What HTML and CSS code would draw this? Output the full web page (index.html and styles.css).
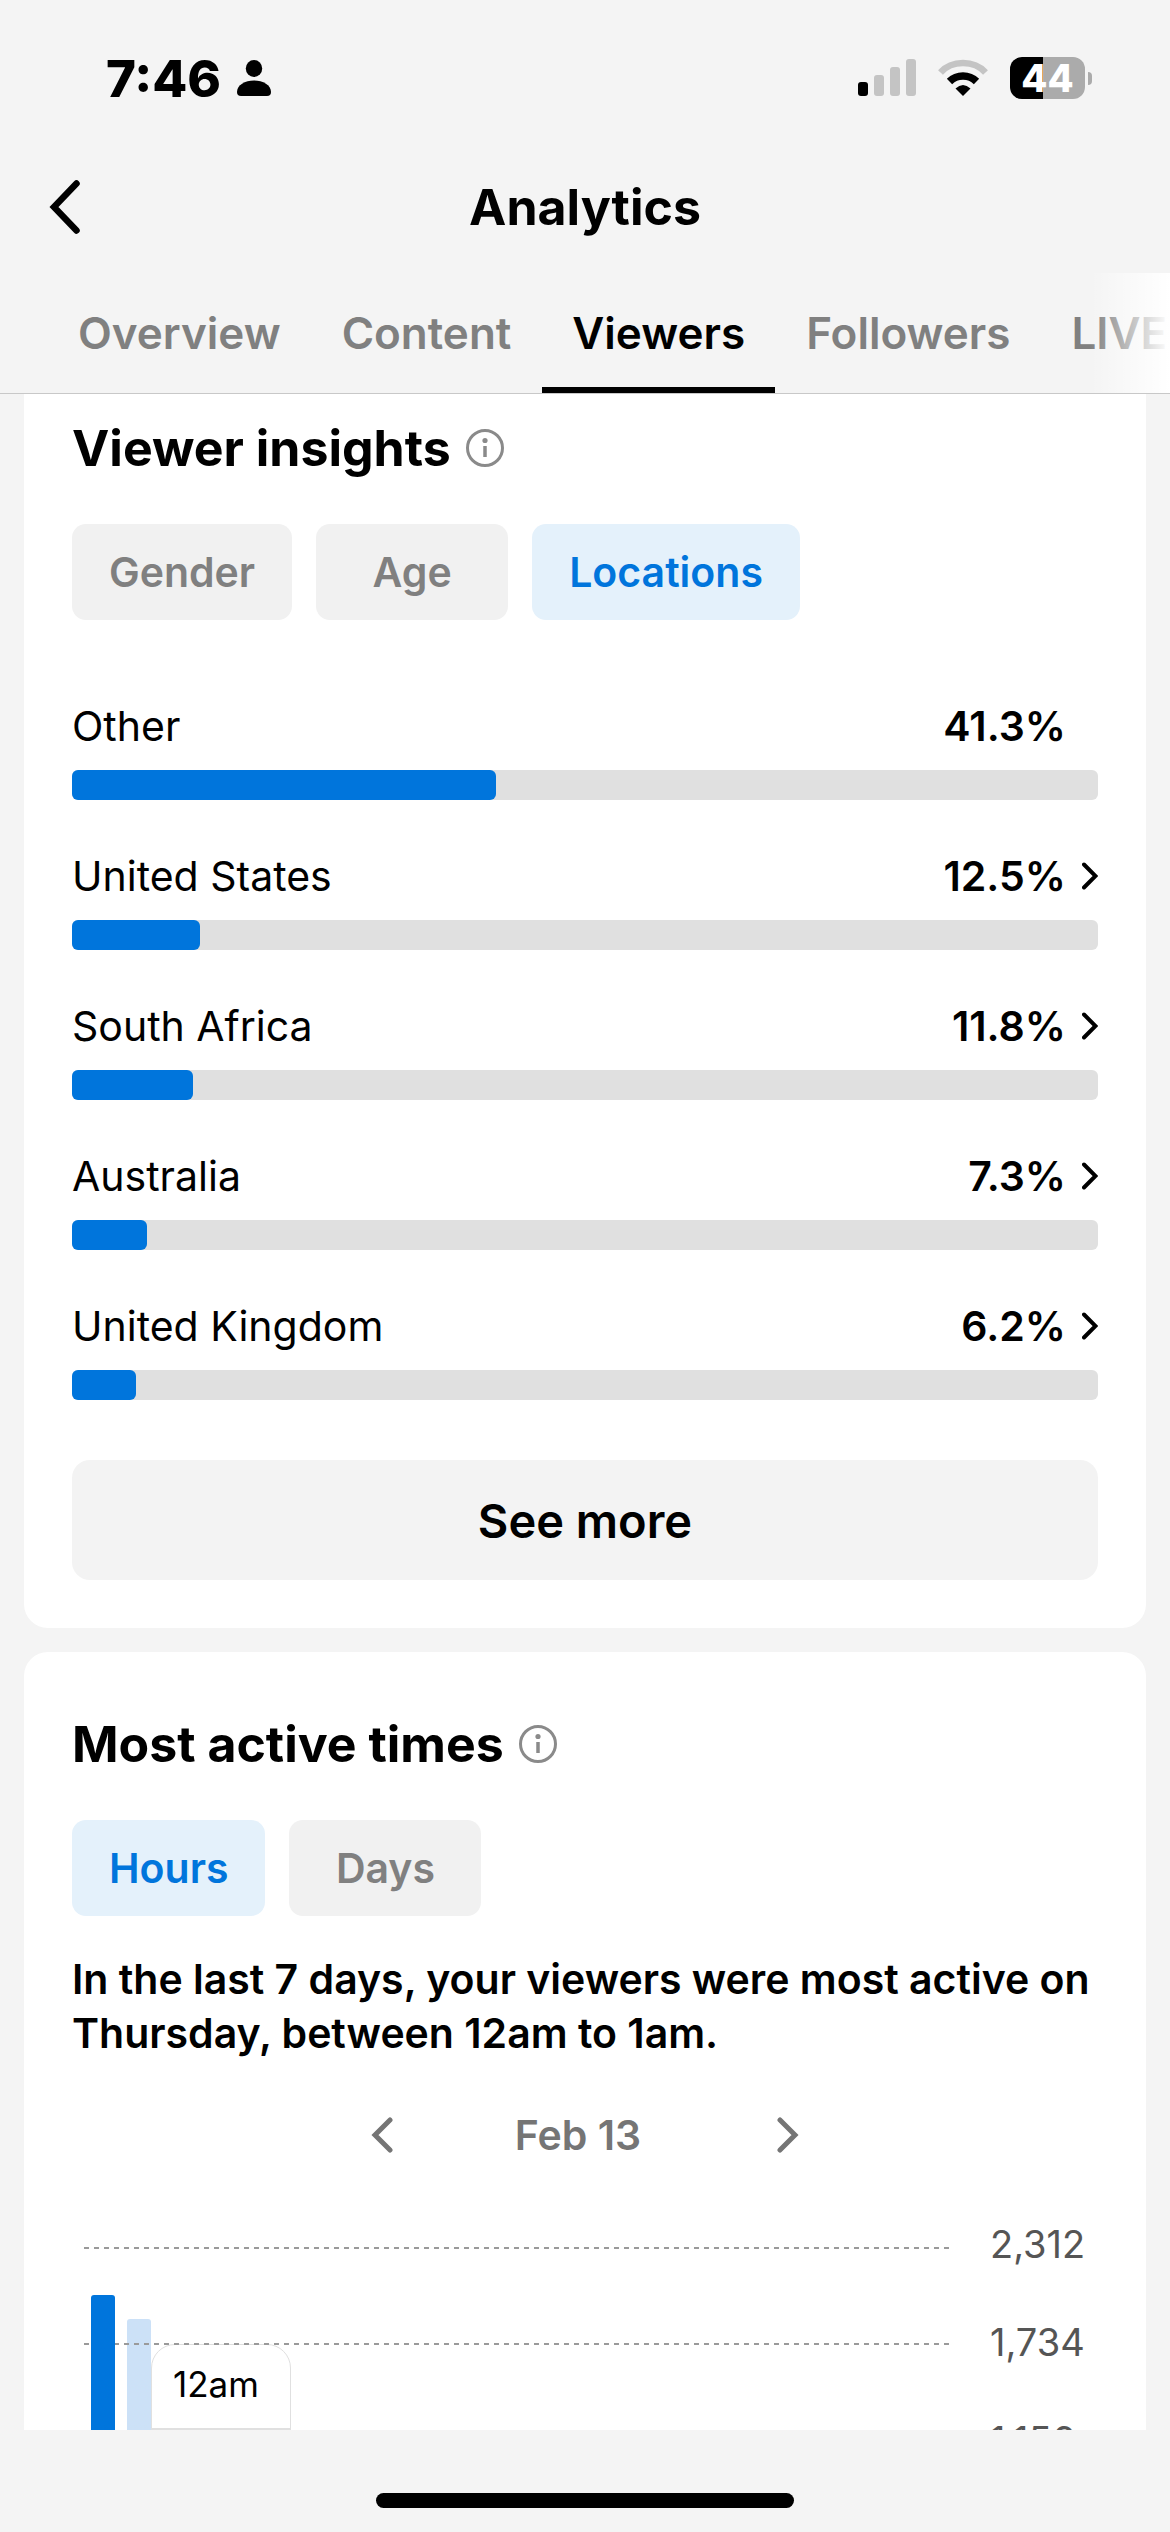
FILE: index.html
```html
<!DOCTYPE html>
<html lang="en">
<head>
<meta charset="utf-8">
<meta name="viewport" content="width=device-width, initial-scale=1">
<title>Analytics</title>
<link rel="stylesheet" href="styles.css">
</head>
<body>
<div class="status">
  <div class="status-left">
    <span class="time">7:46</span>
    <svg width="34" height="36" viewBox="0 0 34 36"><ellipse cx="17" cy="8.5" rx="8.2" ry="8.5"/><path d="M0 32C0 25 8 20.500 17 20.500S34 25 34 32Q34 36 30 36H4Q0 36 0 32Z"/></svg>
  </div>
  <div class="status-right">
    <svg width="58" height="38" viewBox="0 0 58 38"><rect x="0" y="23" width="10" height="14" rx="3"/><g fill="#c4c4c4"><rect x="16" y="16" width="10" height="21" rx="3"/><rect x="32" y="8" width="10" height="29" rx="3"/><rect x="48" y="0" width="10" height="37" rx="3"/></g></svg>
    <svg width="50" height="38" viewBox="0 0 50 38"><path fill="none" stroke="#c4c4c4" stroke-width="6.500" d="M2.500 13.500Q11 4 25 4T47.500 13.500"/><path fill="none" stroke="#000" stroke-width="7.500" d="M11.500 22.500Q17 17 25 17T38.500 22.500"/><path d="M17.500 29.500Q25 22.500 32.500 29.500L25 37Z"/></svg>
    <div class="battery"><span class="cell">44</span><span class="tip"></span></div>
  </div>
</div>
<header class="nav">
  <button class="icon-btn back" aria-label="Back"><svg width="32" height="58" viewBox="0 0 32 58"><path d="M28.500 5.500L6 29L28.500 52.500" fill="none" stroke="#000" stroke-width="6.500" stroke-linecap="round" stroke-linejoin="miter"/></svg></button>
  <h1>Analytics</h1>
</header>
<nav class="tabs">
  <a href="#overview">Overview</a>
  <a href="#content">Content</a>
  <a href="#viewers" class="active">Viewers</a>
  <a href="#followers">Followers</a>
  <a href="#live">LIVE</a>
</nav>
<main>
  <section class="card first">
    <div class="heading">
      <h2>Viewer insights</h2>
      <button class="icon-btn" aria-label="About viewer insights"><svg width="40" height="40" viewBox="0 0 40 40"><circle cx="20" cy="20" r="17.500" fill="none" stroke="#8a8a8a" stroke-width="3"/><circle cx="20" cy="12.500" r="2.600" fill="#8a8a8a"/><path d="M20 18V29" stroke="#8a8a8a" stroke-width="3.500"/></svg></button>
    </div>
    <div class="chips">
      <button class="chip">Gender</button>
      <button class="chip">Age</button>
      <button class="chip on">Locations</button>
    </div>
    <ul class="places">
      <li><div class="row"><span>Other</span><span class="pct">41.3%</span></div><div class="track"><div class="fill" style="width:41.3%"></div></div></li>
      <li><div class="row"><span>United States</span><a href="#us" class="pct">12.5%<svg width="16" height="28" viewBox="0 0 16 28"><path d="M2 2.500L13.500 14L2 25.500" /></svg></a></div><div class="track"><div class="fill" style="width:12.5%"></div></div></li>
      <li><div class="row"><span>South Africa</span><a href="#za" class="pct">11.8%<svg width="16" height="28" viewBox="0 0 16 28"><path d="M2 2.500L13.500 14L2 25.500" /></svg></a></div><div class="track"><div class="fill" style="width:11.8%"></div></div></li>
      <li><div class="row"><span>Australia</span><a href="#au" class="pct">7.3%<svg width="16" height="28" viewBox="0 0 16 28"><path d="M2 2.500L13.500 14L2 25.500" /></svg></a></div><div class="track"><div class="fill" style="width:7.3%"></div></div></li>
      <li><div class="row"><span>United Kingdom</span><a href="#uk" class="pct">6.2%<svg width="16" height="28" viewBox="0 0 16 28"><path d="M2 2.500L13.500 14L2 25.500" /></svg></a></div><div class="track"><div class="fill" style="width:6.2%"></div></div></li>
    </ul>
    <button class="more">See more</button>
  </section>
  <section class="card">
    <div class="heading">
      <h2>Most active times</h2>
      <button class="icon-btn" aria-label="About most active times"><svg width="40" height="40" viewBox="0 0 40 40"><circle cx="20" cy="20" r="17.500" fill="none" stroke="#8a8a8a" stroke-width="3"/><circle cx="20" cy="12.500" r="2.600" fill="#8a8a8a"/><path d="M20 18V29" stroke="#8a8a8a" stroke-width="3.500"/></svg></button>
    </div>
    <div class="chips">
      <button class="chip on">Hours</button>
      <button class="chip">Days</button>
    </div>
    <p class="summary">In the last 7 days, your viewers were most active on Thursday, between 12am to 1am.</p>
    <div class="dates">
      <button class="icon-btn" aria-label="Previous day"><svg width="22" height="36" viewBox="0 0 22 36"><path d="M19 3L4 18L19 33"/></svg></button>
      <span class="date">Feb 13</span>
      <button class="icon-btn" aria-label="Next day"><svg width="22" height="36" viewBox="0 0 22 36"><path d="M3 3L18 18L3 33"/></svg></button>
    </div>
    <div class="chart">
      <div class="plot">
        <div class="grid"><i></i><i></i><i></i><i></i><i></i></div>
        <div class="bar current" style="height:87.5%"></div>
        <div class="bar" style="height:81.2%"></div>
        <div class="tooltip">12am</div>
      </div>
      <div class="axis"><span>2,312</span><span>1,734</span><span>1,156</span></div>
    </div>
  </section>
</main>
<footer class="home"><div class="indicator"></div></footer>
</body>
</html>
```
FILE: styles.css
```css
* { box-sizing: border-box; }
body {
  margin: 0;
  height: 100vh;
  display: flex;
  flex-direction: column;
  overflow: hidden;
  background: #f4f4f4;
  color: #000;
  font-family: Inter, "Liberation Sans", sans-serif;
  font-size: 41px;
}
h1, h2, p, ul { margin: 0; padding: 0; }
ul { list-style: none; }
a { color: inherit; text-decoration: none; }
button { border: 0; padding: 0; background: none; color: inherit; font: inherit; cursor: pointer; }
svg { display: block; flex: none; }

.icon-btn { display: flex; align-items: center; }

/* Status bar */
.status {
  flex: none;
  height: 140px;
  padding: 16px 78px 0 106px;
  display: flex;
  align-items: center;
  justify-content: space-between;
}
.status-left { display: flex; align-items: center; gap: 16px; }
.status-right { display: flex; align-items: center; gap: 22px; }
.time { font-size: 51px; font-weight: 800; }
.battery { display: flex; align-items: center; gap: 3px; }
.cell {
  width: 75px;
  height: 42px;
  border-radius: 12px;
  background: linear-gradient(90deg, #000 44%, #ababab 44%);
  color: #fff;
  font-size: 38px;
  font-weight: 800;
  line-height: 42px;
  text-align: center;
}
.tip { width: 4px; height: 13px; border-radius: 0 4px 4px 0; background: #ababab; }

/* Title bar */
.nav {
  flex: none;
  height: 133px;
  padding: 0 48px;
  display: grid;
  grid-template-columns: 1fr auto 1fr;
  align-items: center;
}
.nav h1 { font-size: 50px; font-weight: 700; }

/* Tabs */
.tabs {
  flex: none;
  position: relative;
  height: 121px;
  padding: 0 48px;
  display: flex;
  gap: 1px;
  border-bottom: 1px solid #c8c8c8;
  overflow: hidden;
  color: #808080;
  font-size: 44px;
  font-weight: 600;
  line-height: 120px;
}
.tabs a { flex: none; padding: 0 30px; }
.tabs .active { color: #000; box-shadow: inset 0 -6px #000; }
.tabs::after {
  content: "";
  position: absolute;
  top: 0;
  right: 0;
  bottom: 0;
  width: 80px;
  background: linear-gradient(90deg, rgba(255, 255, 255, 0), #fff);
}

/* Cards */
main {
  flex: 1;
  min-height: 0;
  padding: 0 24px;
  overflow: hidden;
}
.card {
  margin-bottom: 24px;
  padding: 60px 48px 48px;
  border-radius: 24px;
  background: #fff;
}
.card.first { padding-top: 22px; border-radius: 0 0 24px 24px; }
.heading { display: flex; align-items: center; gap: 14px; margin-bottom: 44px; }
.heading h2 { font-size: 50px; font-weight: 700; line-height: 64px; }

.chips { display: flex; gap: 24px; }
.chip {
  min-width: 192px;
  height: 96px;
  padding: 0 37px;
  border-radius: 14px;
  background: #f1f1f1;
  color: #808080;
  font-weight: 600;
}
.chip.on { background: #e4f1fb; color: #0075dc; }

.places { display: grid; gap: 46px; margin: 76px 0 60px; }
.row { display: flex; justify-content: space-between; margin-bottom: 14px; line-height: 60px; }
.pct { width: 160px; padding-right: 32px; font-weight: 600; text-align: right; }
a.pct { display: flex; align-items: center; justify-content: flex-end; gap: 16px; padding-right: 0; }
.pct svg { fill: none; stroke: #000; stroke-width: 4; stroke-linecap: round; }
.track { height: 30px; border-radius: 6px; background: #e0e0e0; }
.fill { height: 100%; border-radius: 6px; background: #0075dc; }

.more {
  display: block;
  width: 100%;
  height: 120px;
  border-radius: 18px;
  background: #f3f3f3;
  font-size: 47px;
  font-weight: 600;
}

.summary { margin: 36px 0 48px; font-weight: 600; line-height: 54px; }

.dates { display: flex; justify-content: center; color: #757575; font-weight: 600; line-height: 54px; }
.dates svg { fill: none; stroke: #757575; stroke-width: 5; stroke-linecap: round; }
.date { padding: 0 136px 0 122px; }

/* Hourly chart */
.chart { display: flex; gap: 40px; margin-top: 58px; padding-left: 12px; }
.plot {
  flex: 1;
  position: relative;
  height: 384px;
  margin-top: 27px;
  padding-left: 7px;
  display: flex;
  align-items: flex-end;
  gap: 12px;
}
.bar { width: 24px; border-radius: 3px 3px 0 0; background: #cce1f7; }
.bar.current { z-index: 2; background: #0075dc; }
.grid {
  position: absolute;
  inset: 0;
  z-index: 1;
  display: flex;
  flex-direction: column;
  justify-content: space-between;
}
.grid i { height: 2px; background: repeating-linear-gradient(90deg, #9a9a9a 0 5px, transparent 5px 10px); }
.tooltip {
  position: absolute;
  top: 97px;
  left: 67px;
  width: 140px;
  height: 180px;
  padding-left: 21px;
  border: 1px solid #e0e0e0;
  border-radius: 24px;
  background: linear-gradient(#e0e0e0, #e0e0e0) 0 83px / 100% 2px no-repeat #fff;
  font-size: 35px;
  line-height: 78px;
}
.axis { width: 108px; display: flex; flex-direction: column; gap: 50px; color: #555; font-size: 38px; line-height: 48px; }

/* Home indicator */
.home { flex: none; height: 102px; padding-top: 63px; }
.indicator { width: 418px; height: 15px; margin: 0 auto; border-radius: 8px; background: #000; }
```
